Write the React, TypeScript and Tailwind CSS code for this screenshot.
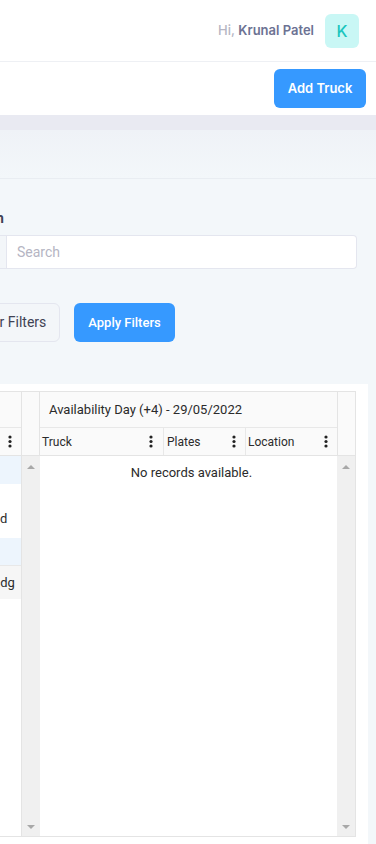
import React from "react";

const roboto = { fontFamily: "Roboto, 'Liberation Sans', sans-serif" };

function Kebab() {
  return (
    <svg width="4" height="13" viewBox="0 0 4 13" className="shrink-0">
      <circle cx="2" cy="2" r="1.6" fill="#222" />
      <circle cx="2" cy="6.5" r="1.6" fill="#222" />
      <circle cx="2" cy="11" r="1.6" fill="#222" />
    </svg>
  );
}

function ArrowUp() {
  return (
    <svg width="8" height="5" viewBox="0 0 8 5">
      <path d="M0 5 L4 1 L8 5 Z" fill="#a8a8a8" />
    </svg>
  );
}

function ArrowDown() {
  return (
    <svg width="8" height="5" viewBox="0 0 8 5">
      <path d="M0 0 L8 0 L4 4 Z" fill="#a8a8a8" />
    </svg>
  );
}

function Scrollbar() {
  return (
    <div className="w-[18px] h-full bg-[#f0f0f0] flex flex-col items-center justify-between pt-[8px] pb-[6px]">
      <ArrowUp />
      <ArrowDown />
    </div>
  );
}

export default function App() {
  return (
    <div
      className="w-[376px] h-[844px] overflow-hidden bg-[#f3f6f9] flex flex-col"
      style={{ fontFamily: "Inter, 'Noto Sans', sans-serif" }}
    >
      {/* top bar */}
      <header className="h-[62px] shrink-0 bg-white border-b border-[#eef0f4] flex items-center justify-end pr-[17px]">
        <span className="text-[13px] font-medium text-[#b5b5c3] mr-[11px]">
          Hi, <span className="font-semibold text-[#6c7293]">Krunal Patel</span>
        </span>
        <div className="w-[34px] h-[34px] rounded-[6px] bg-[#c9f7f5] text-[#1bc5bd] text-[16px] font-medium flex items-center justify-center">
          K
        </div>
      </header>

      {/* subheader */}
      <div className="h-[53px] shrink-0 bg-white flex items-center justify-end pr-[10px]">
        <button className="h-[39px] w-[92px] rounded-[6px] bg-[#3699ff] text-white text-[13px] font-semibold">
          Add Truck
        </button>
      </div>

      <div className="h-[15px] shrink-0 bg-[#e9eaf2]" />
      <div className="h-[49px] shrink-0 bg-gradient-to-b from-[#eff2f7] to-[#f3f7fa] border-b border-[#e9edf2]" />

      {/* filters */}
      <div className="flex flex-col flex-1 bg-[#f3f7fa]" style={roboto}>
        <div className="mt-[31px] h-[16px] leading-[16px] ml-[-40px] text-[14px] font-bold text-[#3f4254]">
          Search
        </div>

        <div className="mt-[9px] h-[34px] flex mr-[19px]">
          <div className="w-[7px] h-full bg-[#f3f6f9] border border-l-0 border-[#e4e6ef]" />
          <input
            className="flex-1 h-full bg-white border border-l-0 border-[#e4e6ef] rounded-r-[4px] pl-[10px] text-[14px] outline-none placeholder:text-[#b5b5c3]"
            placeholder="Search"
          />
        </div>

        <div className="mt-[34px] flex">
          <button className="ml-[-42px] h-[39px] px-[13px] rounded-[6px] border border-[#e4e6ef] bg-[#f3f6f9] text-[14px] text-[#3f4254]">
            Clear Filters
          </button>
          <button className="ml-[14px] h-[39px] px-[14px] rounded-[6px] bg-[#3699ff] text-white text-[13px] font-medium">
            Apply Filters
          </button>
        </div>

        {/* grid card */}
        <div className="mt-[42px] mr-[8px] flex-1 bg-white pt-[7px] pr-[12px]">
          <div className="h-[446px] border-t border-r border-b border-[#e4e4e4] flex flex-col text-[#2b2b2b]">
            {/* header */}
            <div className="h-[64px] shrink-0 flex bg-[#fafafa] border-b border-[#e4e4e4]">
              <div className="w-[22px] flex flex-col border-r border-[#e4e4e4]">
                <div className="h-[36px] border-b border-[#e8e8e8]" />
                <div className="flex-1 flex items-center justify-end pr-[9px]">
                  <Kebab />
                </div>
              </div>
              <div className="w-[18px] border-r border-[#e4e4e4]" />
              <div className="w-[298px] flex flex-col border-r border-[#e4e4e4]">
                <div className="h-[36px] border-b border-[#e8e8e8] flex items-center pl-[9px] text-[13px]">
                  Availability Day (+4) - 29/05/2022
                </div>
                <div className="flex-1 flex text-[12px]">
                  <div className="w-[124px] flex items-center justify-between pl-[2px] pr-[10px] border-r border-[#e8e8e8]">
                    <span>Truck</span>
                    <Kebab />
                  </div>
                  <div className="w-[82px] flex items-center justify-between pl-[3px] pr-[9px] border-r border-[#e8e8e8]">
                    <span>Plates</span>
                    <Kebab />
                  </div>
                  <div className="flex-1 flex items-center justify-between pl-[2px] pr-[9px]">
                    <span>Location</span>
                    <Kebab />
                  </div>
                </div>
              </div>
              <div className="w-[17px]" />
            </div>

            {/* body */}
            <div className="flex-1 flex min-h-0">
              <div className="w-[22px] flex flex-col border-r border-[#e4e4e4] overflow-hidden text-[13px] whitespace-nowrap">
                <div className="h-[28px] bg-[#edf5fd]" />
                <div className="h-[54px] bg-white flex items-end pb-[10px]">
                  <span className="ml-[-7px]">ed</span>
                </div>
                <div className="h-[27px] bg-[#edf5fd]" />
                <div className="h-[34px] bg-[#f6f6f6] flex items-center border-t border-[#e8e8e8]">
                  <span className="ml-[-11px]">Bldg</span>
                </div>
              </div>
              <Scrollbar />
              <div className="w-[298px] flex flex-col items-center pt-[7px] pl-[6px] text-[13px]">
                No records available.
              </div>
              <Scrollbar />
            </div>
          </div>
        </div>
      </div>
    </div>
  );
}
